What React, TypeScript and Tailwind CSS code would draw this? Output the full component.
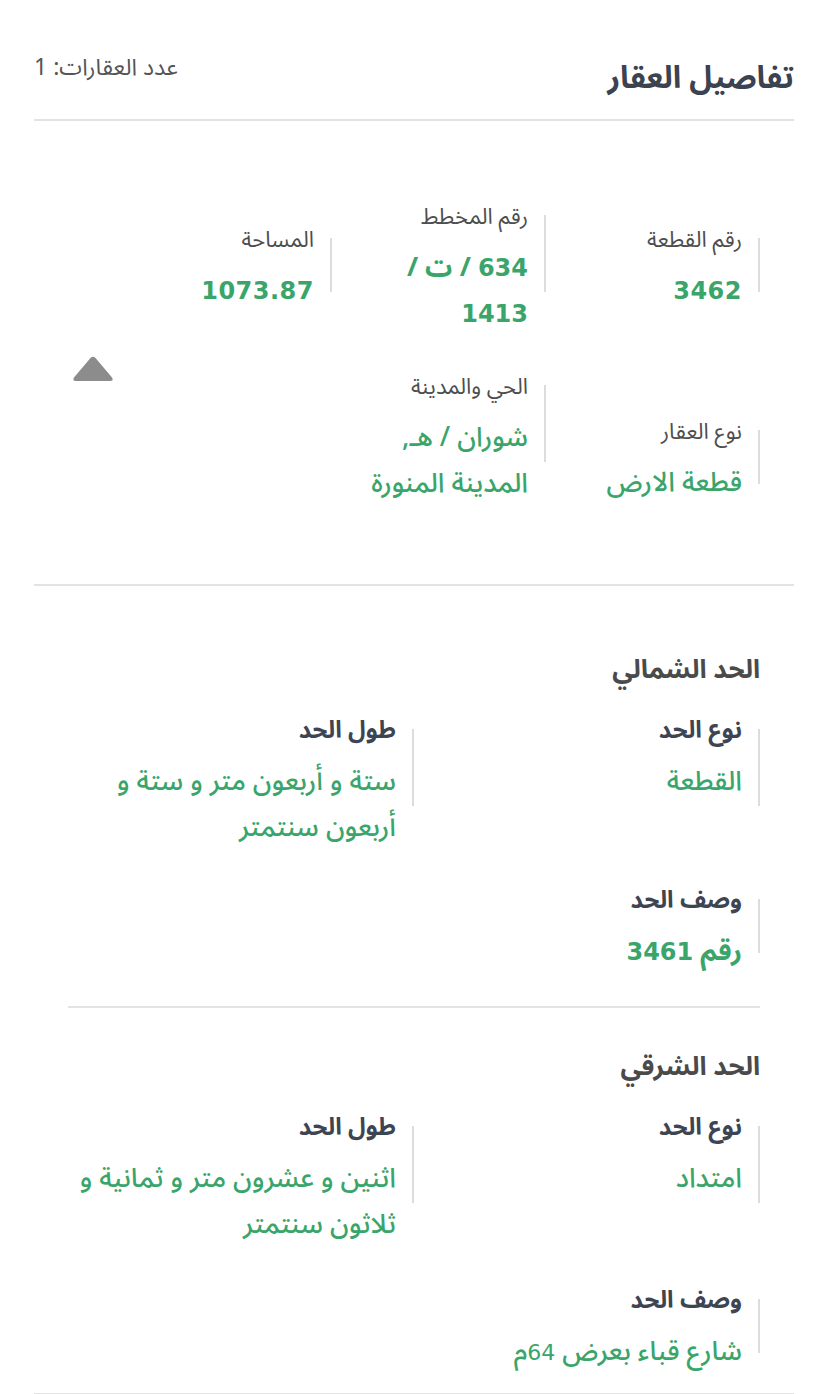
import React from "react";

type Item = { label: string; lines: string[]; tall?: boolean; num?: boolean; bold?: boolean; className?: string };

// digits in the reference use a wide latin face, arabic letters a rounded one
function Mixed({ text, num }: { text: string; num?: boolean }) {
    const parts = text.split(/(\d[\d.]*)/);
    return (
        <>
            {parts.map((p, i) =>
                /^\d/.test(p) ? (
                    <span key={i} className={`font-['DejaVu_Sans',sans-serif] ${num ? "text-[24px] font-bold tracking-[0.5px]" : "text-[22px] font-normal"}`}>{p}</span>
                ) : (
                    <span key={i}>{p}</span>
                )
            )}
        </>
    );
}

function Field({ label, lines, tall, num, bold, className = "" }: Item) {
    return (
        <div className={`flex items-start gap-4 ${className}`}>
            <div className={`w-[2px] shrink-0 bg-[#dcdcdc] mt-[18px] ${tall ? "h-[77px]" : "h-[54px]"}`} />
            <div className="flex flex-col">
                <span className={`leading-[40px] ${bold ? "text-[24px] font-bold text-[#3d4452]" : "text-[22px] text-[#4d4d4d]"}`}>{label}</span>
                <span className={`mt-2 text-[27px] leading-[46px] text-[#3aa56b] ${num ? "font-bold" : "font-medium"}`}>
                    {lines.map((l, i) => (
                        <React.Fragment key={i}>
                            {i > 0 && <br />}
                            <Mixed text={l} num={num} />
                        </React.Fragment>
                    ))}
                </span>
            </div>
        </div>
    );
}

function Boundary({ title, type, length, desc, descNum, gap }: { title: string; type: string; length: string[]; desc: string; descNum?: boolean; gap: string }) {
    return (
        <div className="flex flex-col">
            <h3 className="text-[26px] leading-[40px] font-bold text-[#4a4a4a]">{title}</h3>
            <div className="grid grid-cols-2 mt-[21px]">
                <Field label="نوع الحد" lines={[type]} tall bold />
                <Field label="طول الحد" lines={length} tall bold />
            </div>
            <div className={gap}>
                <Field label="وصف الحد" lines={[desc]} bold num={descNum} />
            </div>
        </div>
    );
}

export default function App() {
    return (
        <div dir="rtl" className="w-full bg-white px-[34px] font-['Noto_Sans_Arabic','Noto_Sans',sans-serif]">
            {/* Header */}
            <div className="flex items-start justify-between pt-[50px] pb-[17px] border-b-2 border-[#e3e3e3]">
                <h2 className="mt-[4px] text-[31px] leading-[48px] font-bold text-[#3b4250]">تفاصيل العقار</h2>
                <span className="text-[23px] leading-[36px] text-[#555]">عدد العقارات: 1</span>
            </div>

            {/* Property details */}
            <div className="flex px-[34px] pt-[76px] pb-[77px] border-b-2 border-[#e3e3e3]">
                <div className="flex-1 flex flex-col gap-[30px]">
                    <div className="grid grid-cols-3 items-center">
                        <Field label="رقم القطعة" lines={["3462"]} num />
                        <Field label="رقم المخطط" lines={["634 / ت /", "1413"]} num tall />
                        <Field label="المساحة" lines={["1073.87"]} num />
                    </div>
                    <div className="grid grid-cols-3 items-start">
                        <Field label="نوع العقار" lines={["قطعة الارض"]} className="mt-[45px]" />
                        <Field label="الحي والمدينة" lines={["شوران / هـ,", "المدينة المنورة"]} tall />
                    </div>
                </div>
                <div className="w-[50px] flex justify-center items-start pt-[158px]">
                    <svg width="44" height="28" viewBox="0 0 44 28">
                        <path d="M19.5 3 Q22 0.5 24.5 3 L41 22.5 Q43 26 39 26 L5 26 Q1 26 3 22.5 Z" fill="#8c8c8c" />
                    </svg>
                </div>
            </div>

            {/* Boundaries */}
            <div className="px-[34px] pb-[17px] border-b-2 border-[#e3e3e3]">
                <div className="pt-[64px] pb-[31px] border-b-2 border-[#e3e3e3]">
                    <Boundary
                        title="الحد الشمالي"
                        type="القطعة"
                        length={["ستة و أربعون متر و ستة و", "أربعون سنتمتر"]}
                        desc="رقم 3461"
                        descNum
                        gap="mt-[30px]"
                    />
                </div>
                <div className="pt-[39px]">
                    <Boundary
                        title="الحد الشرقي"
                        type="امتداد"
                        length={["اثنين و عشرون متر و ثمانية و", "ثلاثون سنتمتر"]}
                        desc="شارع قباء بعرض 64م"
                        gap="mt-[33px]"
                    />
                </div>
            </div>
        </div>
    );
}
